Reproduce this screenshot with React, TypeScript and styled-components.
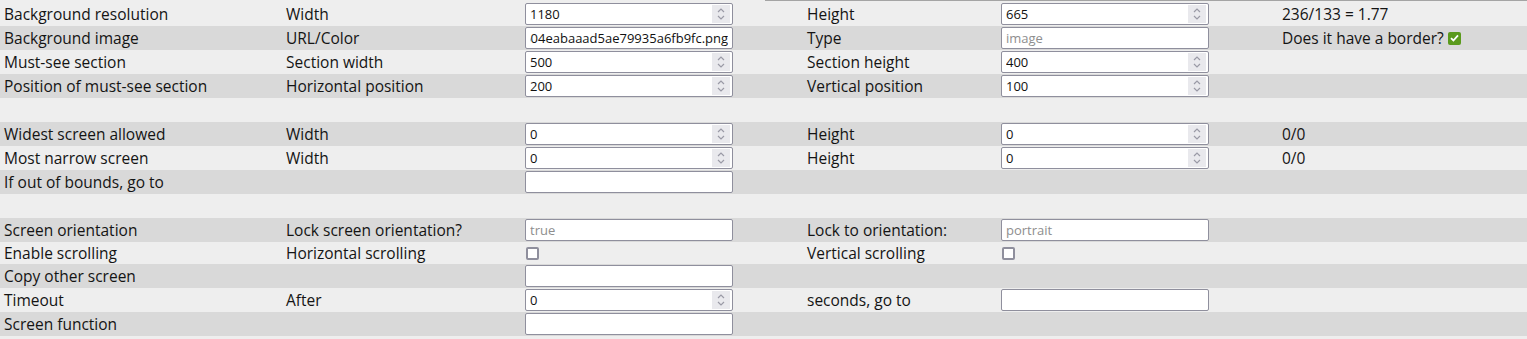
import React from 'react';
import styled, { createGlobalStyle } from 'styled-components';

const GlobalStyle = createGlobalStyle`
  html, body {
    margin: 0;
    padding: 0;
    background: #eeeeee;
    font-family: 'Open Sans', 'Noto Sans', sans-serif;
    color: #141414;
  }
`;

const Page = styled.div`
  display: flex;
  flex-direction: column;
  width: 1527px;
`;

// bottom edge of the panel above, which is cut by the screenshot
const TopEdge = styled.div`
  height: 1px;
  margin-left: 765px;
  border-top: 1px solid #a4a4a4;
`;

const Row = styled.div<{ $shade: boolean; $h: number }>`
  display: grid;
  grid-template-columns: 282px 239px 282px 194px 281px 1fr;
  height: ${(p) => p.$h}px;
  background: ${(p) => (p.$shade ? '#d9d9d9' : '#eeeeee')};
`;

const Cell = styled.div`
  display: flex;
  align-items: center;
  padding-left: 4px;
  font-size: 15.5px;
  white-space: nowrap;
`;

const TextBox = styled.input`
  box-sizing: border-box;
  width: 208px;
  height: 22px;
  margin: 0;
  padding: 0 4px;
  border: 1px solid #8f8f9d;
  border-radius: 2px;
  background: #ffffff;
  font-family: 'Open Sans', 'Noto Sans', sans-serif;
  font-size: 13px;
  color: #111111;
  outline: none;

  &::placeholder {
    color: #8e8e8e;
  }
`;

const NumberFrame = styled.div`
  box-sizing: border-box;
  display: flex;
  align-items: center;
  width: 208px;
  height: 22px;
  border: 1px solid #8f8f9d;
  border-radius: 2px;
  background: #ffffff;
`;

const NumberInput = styled.input`
  flex: 1;
  min-width: 0;
  height: 100%;
  margin: 0;
  padding: 0 4px;
  border: none;
  background: transparent;
  font-family: 'Open Sans', 'Noto Sans', sans-serif;
  font-size: 13px;
  color: #111111;
  outline: none;
`;

const Spinner = styled.span`
  display: flex;
  align-items: center;
  justify-content: center;
  width: 18px;
  height: 18px;
  margin-right: 2px;
  background: #e9e9ed;
`;

const Box = styled.span<{ $checked?: boolean }>`
  box-sizing: border-box;
  display: inline-flex;
  align-items: center;
  justify-content: center;
  width: 13px;
  height: 13px;
  margin-left: ${(p) => (p.$checked ? '4px' : '1px')};
  border: ${(p) => (p.$checked ? 'none' : '2px solid #8f8f9d')};
  border-radius: 2px;
  background: ${(p) => (p.$checked ? '#5a9a1c' : '#ffffff')};
`;

const NumberBox = ({ value }: { value: string }) => (
  <NumberFrame>
    <NumberInput defaultValue={value} />
    <Spinner>
      <svg width='10' height='14' viewBox='0 0 10 14'>
        <path d='M2 5 L5 2 L8 5' fill='none' stroke='#9a9aa6' strokeWidth='1.2' />
        <path d='M2 9 L5 12 L8 9' fill='none' stroke='#9a9aa6' strokeWidth='1.2' />
      </svg>
    </Spinner>
  </NumberFrame>
);

const EndScrolled = ({ value }: { value: string }) => {
  const ref = React.useRef<HTMLInputElement>(null);
  React.useEffect(() => {
    if (ref.current) ref.current.scrollLeft = ref.current.scrollWidth;
  }, []);
  return <TextBox ref={ref} defaultValue={value} />;
};

const Check = ({ checked }: { checked?: boolean }) => (
  <Box $checked={checked}>
    {checked && (
      <svg width='9' height='8' viewBox='0 0 9 8'>
        <path d='M1 4.2 L3.4 6.5 L8 1.3' fill='none' stroke='#ffffff' strokeWidth='1.8' />
      </svg>
    )}
  </Box>
);

type RowData = { cells: React.ReactNode[]; h?: number };

const rows: RowData[] = [
  { cells: ['Background resolution', 'Width', <NumberBox value='1180' />, 'Height', <NumberBox value='665' />, '236/133 = 1.77'] },
  {
    cells: [
      'Background image',
      'URL/Color',
      <EndScrolled value='backgrounds/c2f7e19a604eabaaad5ae79935a6fb9fc.png' />,
      'Type',
      <TextBox placeholder='image' />,
      <>Does it have a border?<Check checked /></>
    ]
  },
  { cells: ['Must-see section', 'Section width', <NumberBox value='500' />, 'Section height', <NumberBox value='400' />] },
  { cells: ['Position of must-see section', 'Horizontal position', <NumberBox value='200' />, 'Vertical position', <NumberBox value='100' />] },
  { cells: [] },
  { cells: ['Widest screen allowed', 'Width', <NumberBox value='0' />, 'Height', <NumberBox value='0' />, '0/0'] },
  { cells: ['Most narrow screen', 'Width', <NumberBox value='0' />, 'Height', <NumberBox value='0' />, '0/0'] },
  { cells: ['If out of bounds, go to', '', <TextBox />] },
  { cells: [] },
  { cells: ['Screen orientation', 'Lock screen orientation?', <TextBox placeholder='true' />, 'Lock to orientation:', <TextBox placeholder='portrait' />] },
  { cells: ['Enable scrolling', 'Horizontal scrolling', <Check />, 'Vertical scrolling', <Check />], h: 22 },
  { cells: ['Copy other screen', '', <TextBox />] },
  { cells: ['Timeout', 'After', <NumberBox value='0' />, 'seconds, go to', <TextBox />] },
  { cells: ['Screen function', '', <TextBox />] }
];

const App = () => (
  <Page>
    <GlobalStyle />
    <TopEdge />
    {rows.map((row, i) => (
      <Row key={i} $shade={i % 2 === 1} $h={row.h ?? 24}>
        {row.cells.map((cell, j) => (
          <Cell key={j}>{cell}</Cell>
        ))}
      </Row>
    ))}
  </Page>
);

export default App;
